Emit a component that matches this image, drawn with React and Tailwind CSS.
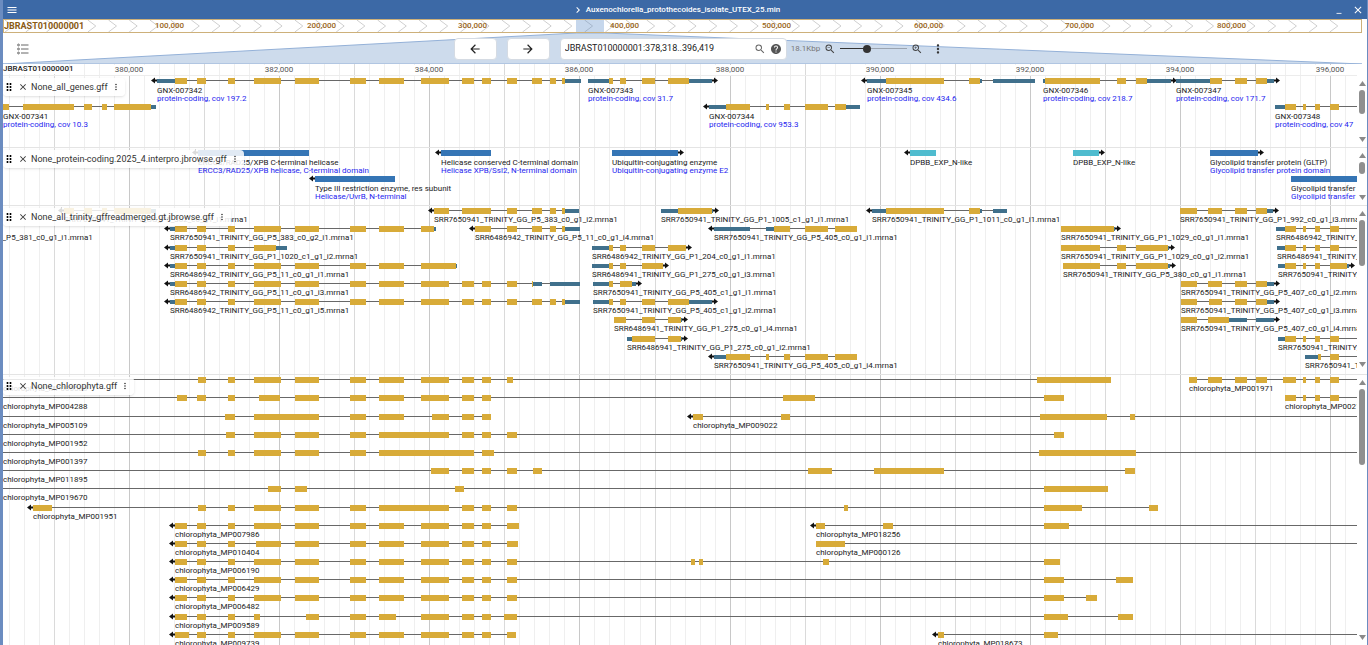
import clsx from 'clsx';
import {
    MdArrowBack, MdArrowForward, MdClose, MdDragIndicator, MdHelp, MdKeyboardArrowRight,
    MdMenu, MdMinimize, MdMoreVert, MdSearch, MdZoomIn, MdZoomOut,
} from 'react-icons/md';

const ORIGIN = 3;      // x of the view's left edge
const EDGE = 2600;     // features that run out of view end here
const GOLD = '#d8ab39';
const TEAL = '#40708c';
const BLUE = '#3575b5';
const CYAN = '#4fbccf';

// exons shared by most of the gene models around 380,000..386,000
const E1 = [175, 187], E2 = [197, 206], E3 = [228, 235], E4 = [254, 281], E5 = [295, 319];
const E6 = [350, 366], E7 = [379, 404], E8 = [421, 449], E9 = [462, 474], E10 = [482, 491];
const E11 = [507, 517], E12 = [532, 542], E13 = [550, 556], E14 = [562, 565];
const HEAD = [E1, E2, E3, E4, E5, E6, E7];
const MID = [E4, E5, E6, E7, E8, E9, E10];
const TAIL = [E11, E12, E13, E14];
const G343 = [[609, 613], [620, 626], [642, 655]];
const G344 = [[726, 750], [766, 769], [784, 790], [805, 828]];
const G347 = [[1235, 1247], [1256, 1267]];
const G348 = [[1285, 1296], [1303, 1306], [1315, 1320], [1330, 1339]];

const genes = [
    { row: 1, name: 'GNX-007341', desc: 'protein-coding, cov 10.3', cds: [[3, 9], [23, 74], [84, 92], [102, 107], [114, 151]], utr: [[151, 156]] },
    { row: 0, dir: -1, name: 'GNX-007342', desc: 'protein-coding, cov 197.2', cds: [...HEAD, E8, E9, E10, ...TAIL], utr: [[157, 175], [565, 581]] },
    { row: 0, dir: 1, name: 'GNX-007343', desc: 'protein-coding, cov 31.7', cds: [...G343, [668, 689]], utr: [[588, 609], [689, 712]] },
    { row: 1, dir: -1, name: 'GNX-007344', desc: 'protein-coding, cov 953.3', cds: [...G344, [835, 846]], utr: [[709, 726], [846, 860]] },
    { row: 0, dir: -1, name: 'GNX-007345', desc: 'protein-coding, cov 434.6', cds: [[886, 944], [969, 980]], utr: [[867, 886], [980, 982], [993, 1035]] },
    { row: 0, dir: 1, name: 'GNX-007346', desc: 'protein-coding, cov 218.7', cds: [[1045, 1100], [1117, 1126], [1136, 1147]], utr: [[1043, 1045], [1147, 1171]] },
    { row: 0, dir: 1, name: 'GNX-007347', desc: 'protein-coding, cov 171.7', cds: [[1210, 1222], ...G347], utr: [[1176, 1210], [1267, 1274]] },
    { row: 1, end: EDGE, name: 'GNX-007348', desc: 'protein-coding, cov 47', cds: G348, utr: [[1275, 1285]] },
];

const domains = [
    { row: 0, dir: -1, color: BLUE, cds: [[198, 309]], name: 'ERCC3/RAD25/XPB C-terminal helicase', desc: 'ERCC3/RAD25/XPB helicase, C-terminal domain' },
    { row: 1, dir: -1, color: BLUE, cds: [[315, 395]], name: 'Type III restriction enzyme, res subunit', desc: 'Helicase/UvrB, N-terminal' },
    { row: 0, dir: -1, color: BLUE, cds: [[441, 491]], name: 'Helicase conserved C-terminal domain', desc: 'Helicase XPB/Ssl2, N-terminal domain' },
    { row: 0, dir: 1, color: BLUE, cds: [[612, 678]], name: 'Ubiquitin-conjugating enzyme', desc: 'Ubiquitin-conjugating enzyme E2' },
    { row: 0, dir: -1, color: CYAN, cds: [[910, 936]], name: 'DPBB_EXP_N-like' },
    { row: 0, dir: 1, color: CYAN, cds: [[1073, 1099]], name: 'DPBB_EXP_N-like' },
    { row: 0, dir: 1, color: BLUE, cds: [[1210, 1258]], name: 'Glycolipid transfer protein (GLTP)', desc: 'Glycolipid transfer protein domain' },
    { row: 1, color: BLUE, cds: [[1291, EDGE]], name: 'Glycolipid transfer protein (GLTP)', desc: 'Glycolipid transfer protein domain' },
];

const transcripts = [
    { row: 0, dir: -1, name: 'SRR7650941_TRINITY_GG_P5_382_c0_g1_i1.mrna1', cds: [[64, 74], [84, 92], [102, 107], [114, 151]], utr: [[151, 156]] },
    { row: 0, dir: -1, name: 'SRR7650941_TRINITY_GG_P5_383_c0_g1_i2.mrna1', cds: [[434, 449], [462, 491], ...TAIL], utr: [[565, 579]] },
    { row: 0, dir: 1, name: 'SRR7650941_TRINITY_GG_P1_1005_c1_g1_i1.mrna1', cds: [[678, 712]], utr: [[661, 678], [712, 713]] },
    { row: 0, dir: -1, name: 'SRR7650941_TRINITY_GG_P1_1011_c0_g1_i1.mrna1', cds: [[886, 944], [969, 980]], utr: [[872, 886], [980, 982], [993, 1007]] },
    { row: 0, dir: 1, name: 'SRR7650941_TRINITY_GG_P1_992_c0_g1_i3.mrna1', cds: [[1180, 1197], [1208, 1222], ...G347], utr: [[1267, 1273]] },

    { row: 1, name: 'SRR7650941_TRINITY_GG_P5_381_c0_g1_i1.mrna1', cds: [[-91, -60]] },
    { row: 1, dir: -1, name: 'SRR7650941_TRINITY_GG_P5_383_c0_g2_i1.mrna1', cds: [...HEAD, [421, 434]], utr: [[170, 175], [434, 436]] },
    { row: 1, dir: -1, name: 'SRR6486942_TRINITY_GG_P5_11_c0_g1_i4.mrna1', cds: [[475, 491], ...TAIL], utr: [[565, 580]] },
    { row: 1, dir: -1, name: 'SRR7650941_TRINITY_GG_P5_405_c0_g1_i1.mrna1', cds: [[774, 790], [805, 828], [835, 857]], utr: [[714, 750], [766, 774]] },
    { row: 1, dir: 1, name: 'SRR7650941_TRINITY_GG_P1_1029_c0_g1_i1.mrna1', cds: [[1061, 1114]], utr: [[1114, 1115]] },
    { row: 1, end: EDGE, name: 'SRR6486942_TRINITY_GG_P5_406_c0_g1_i1.mrna1', cds: G348, utr: [[1276, 1285]] },

    { row: 2, dir: -1, name: 'SRR7650941_TRINITY_GG_P1_1020_c1_g1_i2.mrna1', cds: [E1, E2, E3, [254, 276]], utr: [[170, 175], [276, 287]] },
    { row: 2, dir: 1, name: 'SRR6486942_TRINITY_GG_P1_204_c0_g1_i1.mrna1', cds: [...G343, [668, 686]], utr: [[592, 609]] },
    { row: 2, dir: 1, name: 'SRR7650941_TRINITY_GG_P1_1029_c0_g1_i2.mrna1', cds: [[1061, 1100], [1117, 1126], [1136, 1168]], utr: [[1168, 1169]] },
    { row: 2, end: EDGE, name: 'SRR6486941_TRINITY_GG_P5_406_c0_g1_i2.mrna1', cds: G348, utr: [[1277, 1285]] },

    { row: 3, dir: -1, name: 'SRR6486942_TRINITY_GG_P5_11_c0_g1_i1.mrna1', cds: [...HEAD, [421, 456]], utr: [[170, 175], [456, 457]] },
    { row: 3, dir: 1, name: 'SRR6486941_TRINITY_GG_P1_275_c0_g1_i3.mrna1', cds: [[609, 613], [620, 626], [642, 663]], utr: [[592, 609]] },
    { row: 3, dir: 1, name: 'SRR7650941_TRINITY_GG_P5_380_c0_g1_i1.mrna1', cds: [[1063, 1100], [1117, 1126], [1136, 1168]], utr: [[1168, 1170]] },
    { row: 3, dir: 1, name: 'SRR7650941_TRINITY_GG_P5_406_c0_g1_i3.mrna1', cds: [[1285, 1296], [1303, 1306], [1315, 1320], [1330, 1347]], utr: [[1278, 1285], [1347, 1349]] },

    { row: 4, dir: -1, name: 'SRR6486942_TRINITY_GG_P5_11_c0_g1_i3.mrna1', cds: [...HEAD, E8, E9, E10, E11, [532, 533]], utr: [[170, 175], [533, 542], [550, 580]] },
    { row: 4, dir: 1, name: 'SRR7650941_TRINITY_GG_P5_405_c1_g1_i1.mrna1', cds: [[609, 613], [620, 632]], utr: [[593, 609], [632, 636]] },
    { row: 4, dir: 1, name: 'SRR7650941_TRINITY_GG_P5_407_c0_g1_i2.mrna1', cds: [[1181, 1197], [1208, 1222], ...G347], utr: [[1267, 1274]] },

    { row: 5, dir: -1, name: 'SRR6486942_TRINITY_GG_P5_11_c0_g1_i5.mrna1', cds: [...HEAD, E8, E9, E10, ...TAIL], utr: [[170, 175], [565, 580]] },
    { row: 5, dir: 1, name: 'SRR7650941_TRINITY_GG_P5_405_c1_g1_i2.mrna1', cds: [...G343, [668, 689]], utr: [[593, 609], [689, 712]] },
    { row: 5, dir: 1, name: 'SRR7650941_TRINITY_GG_P5_407_c0_g1_i3.mrna1', cds: [[1181, 1197], [1209, 1222], ...G347], utr: [[1267, 1274]] },

    { row: 6, dir: 1, name: 'SRR6486941_TRINITY_GG_P1_275_c0_g1_i4.mrna1', cds: [[614, 626], [642, 655], [668, 681]], utr: [[681, 682]] },
    { row: 6, dir: 1, name: 'SRR7650941_TRINITY_GG_P5_407_c0_g1_i4.mrna1', cds: [[1181, 1197], [1208, 1229]], utr: [[1229, 1247], [1256, 1274]] },

    { row: 7, dir: 1, name: 'SRR6486941_TRINITY_GG_P1_275_c0_g1_i2.mrna1', cds: [[632, 655], [668, 681]], utr: [[627, 632], [681, 682]] },
    { row: 7, end: EDGE, name: 'SRR7650941_TRINITY_GG_P5_406_c0_g1_i4.mrna1', cds: G348, utr: [[1278, 1285]] },

    { row: 8, dir: -1, name: 'SRR7650941_TRINITY_GG_P5_405_c0_g1_i4.mrna1', cds: [...G344, [835, 857]], utr: [[714, 726]] },
    { row: 8, end: EDGE, name: 'SRR7650941_TRINITY_GG_P5_406_c0_g1_i5.mrna1', cds: [[1318, 1321], [1330, 1339]], utr: [[1305, 1318]] },

    { row: 9, cds: [...G344, [835, 858]] },
    { row: 9, cds: [[1308, 1320], [1330, 1339]] },
];

const proteins = [
    { row: 0, start: 3, name: 'chlorophyta_MP005588', cds: [[198, 206], E3, ...MID, [507, 513], [1037, 1111]] },
    { row: 0, end: EDGE, name: 'chlorophyta_MP001971', cds: [[1189, 1197], [1208, 1222], ...G347, [1283, 1296], ...G348.slice(1)] },
    { row: 1, start: 3, name: 'chlorophyta_MP004288', cds: [[177, 187], E2, E3, [259, 280], E5, E6, E7, E8, E9, E10, [783, 815], [1044, 1064]] },
    { row: 1, end: EDGE, name: 'chlorophyta_MP002140', cds: G348 },
    { row: 2, start: 3, name: 'chlorophyta_MP005109', cds: [[225, 235], [254, 319], E6, E7, [432, 449], E9, E10] },
    { row: 2, dir: -1, end: EDGE, name: 'chlorophyta_MP009022', cds: [[693, 703], [781, 790], [1040, 1107], [1130, 1135]] },
    { row: 3, start: 3, name: 'chlorophyta_MP001952', cds: [[226, 235], E4, E5, E6, [379, 449], E9, E10, E11, [1054, 1064]] },
    { row: 4, start: 3, end: EDGE, name: 'chlorophyta_MP001397', cds: [[198, 206], E3, E4, E5, E6, [379, 474], [482, 494], [1039, 1136]] },
    { row: 5, start: 3, name: 'chlorophyta_MP011895', cds: [[431, 449], E9, E10, E11, [533, 542], [808, 832], [874, 944], [1125, 1135]] },
    { row: 6, start: 3, name: 'chlorophyta_MP019670', cds: [[268, 281], [295, 307], [455, 464], [1044, 1108]] },
    { row: 7, dir: -1, name: 'chlorophyta_MP001951', cds: [[33, 52], [198, 206], E3, E4, E5, E6, [379, 449], E9, E10, E11, [844, 848], [1044, 1082], [1149, 1158]] },
    { row: 8, dir: -1, name: 'chlorophyta_MP007986', cds: [E1, E2, E3, ...MID, [507, 519]] },
    { row: 8, dir: -1, end: EDGE, name: 'chlorophyta_MP018256', cds: [[816, 825], [883, 893], [1044, 1069]] },
    { row: 9, dir: -1, name: 'chlorophyta_MP010404', cds: [E1, E2, E3, [256, 281], ...MID.slice(1), [507, 518]] },
    { row: 9, end: EDGE, name: 'chlorophyta_MP000126', cds: [[816, 845]] },
    { row: 10, dir: -1, name: 'chlorophyta_MP006190', cds: [E1, E2, E3, ...MID, E11, [691, 695], [699, 703], [823, 829], [1044, 1060]] },
    { row: 11, dir: -1, name: 'chlorophyta_MP006429', cds: [E1, E2, E3, ...MID, E11, [1044, 1064], [1116, 1133]] },
    { row: 12, dir: -1, name: 'chlorophyta_MP006482', cds: [E1, E2, E3, ...MID, E11, [1044, 1064], [1086, 1097]] },
    { row: 13, dir: -1, name: 'chlorophyta_MP009589', cds: [E1, E2, E3, [254, 260], [306, 319], E6, [379, 396], E8, E9, E10, [504, 517], [1044, 1068], [1118, 1133]] },
    { row: 14, dir: -1, name: 'chlorophyta_MP009739', cds: [[175, 189], E2, E3, ...MID, [507, 516]] },
    { row: 14, dir: -1, end: EDGE, name: 'chlorophyta_MP018673', cds: [[938, 944], [1044, 1058]] },
];

const tracks = [
    { label: 'None_all_genes.gff', features: genes, pitch: 26, nameGap: 12, size: 'h-[72px] border-b', thumb: 'h-[24px]' },
    { label: 'None_protein-coding.2025_4.interpro.jbrowse.gff', features: domains, pitch: 26, nameGap: 12, size: 'h-[58px] border-b', thumb: 'h-[12px]' },
    { label: 'None_all_trinity_gffreadmerged.gt.jbrowse.gff', features: transcripts, pitch: 18.2, nameGap: 11, size: 'h-[169px] border-b pb-[2px]', thumb: 'h-[46px]' },
    { label: 'None_chlorophyta.gff', features: proteins, pitch: 18.2, nameGap: 11, size: 'min-h-[270px] flex-1', thumb: 'h-[76px]' },
];

const gridLines = Array.from({ length: 170 }, (_, i) => ({
    x: Math.round(129 + (i - 8) * 15.015),
    kind: (i - 8) % 10 === 0 ? 'major' : (i - 8) % 5 === 0 ? 'half' : 'minor',
}));
const gridColor = { major: '#c8c8c8', half: '#dadada', minor: '#efefef' };
const ticks = Array.from({ length: 9 }, (_, i) => ({ x: Math.round(129 + i * 150.15), text: `${380 + i * 2},000` }));

function TrackListIcon() {
    return (
        <svg viewBox="0 0 24 24" className="size-3" fill="none" stroke="currentColor" strokeWidth="2">
            <path d="M8 4h15M8 12h15M8 20h15" />
            <circle cx="3" cy="4" r="1.8" />
            <circle cx="3" cy="12" r="1.8" />
            <circle cx="3" cy="20" r="1.8" />
        </svg>
    );
}

function GridLines() {
    return (
        <svg className="absolute inset-0 size-full" shapeRendering="crispEdges">
            {gridLines.map(l => (
                <line key={l.x} x1={l.x - ORIGIN + 0.5} x2={l.x - ORIGIN + 0.5} y1="0" y2="100%" stroke={gridColor[l.kind]} />
            ))}
        </svg>
    );
}

function Feature({ feature, pitch, nameGap }) {
    const { row, dir, color = GOLD, cds, utr = [], name, desc } = feature;
    const blocks = [...cds, ...utr];
    const left = Math.min(...blocks.map(b => b[0]));
    const start = feature.start ?? left;
    const end = feature.end ?? Math.max(...blocks.map(b => b[1]));
    const y = Math.floor(4.6 + row * pitch);

    return (
        <g>
            <g shapeRendering="crispEdges">
                <rect x={start} y={y} width={end - start} height="1" fill="#686868" />
                {utr.map(([a, b]) => <rect key={a} x={a} y={y - 1} width={b - a} height="4" fill={TEAL} />)}
                {cds.map(([a, b]) => <rect key={a} x={a} y={y - 2} width={b - a} height="6" fill={color} />)}
            </g>
            {dir === -1 && <path d={`M${start - 6} ${y}.5l4-3v2h2v2h-2v2z`} fill="#111" />}
            {dir === 1 && <path d={`M${end + 6} ${y}.5l-4-3v2h-2v2h2v2z`} fill="#111" />}
            {name && <text x={start} y={y + nameGap + 1} fill="#222">{name}</text>}
            {desc && <text x={start} y={y + nameGap + 9} fill="#2525f0">{desc}</text>}
        </g>
    );
}

function TrackLabel({ text }) {
    return (
        <div className="absolute left-0 top-[2px] flex h-[18px] items-center rounded-sm bg-white/85 pr-1 text-[#333] shadow">
            <MdDragIndicator className="size-3 cursor-grab text-black" />
            <button type="button" aria-label={`Close ${text}`} className="ml-[3px] cursor-pointer">
                <MdClose className="size-2.5" />
            </button>
            <span className="ml-[3px] whitespace-nowrap text-[9px] leading-3">{text}</span>
            <button type="button" aria-label={`${text} menu`} className="ml-[3px] cursor-pointer">
                <MdMoreVert className="size-2.5" />
            </button>
        </div>
    );
}

function ScrollBar({ thumb }) {
    return (
        <div className="flex w-[10px] shrink-0 flex-col items-center bg-white py-[5px]">
            <svg viewBox="0 0 7 5" className="h-[5px] w-[7px]"><path d="M3.5 0L7 5H0z" fill="#8a8a8a" /></svg>
            <div className={clsx('mt-1 w-1.5 rounded-full bg-[#8f8f8f]', thumb)} />
            <svg viewBox="0 0 7 5" className="mt-auto h-[5px] w-[7px]"><path d="M3.5 5L7 0H0z" fill="#8a8a8a" /></svg>
        </div>
    );
}

function Track({ track }) {
    return (
        <section className={clsx('relative flex shrink-0 border-[#e4e4e4]', track.size)}>
            <div className="relative flex-1">
                <svg className="block size-full overflow-hidden text-[8px]">
                    <g transform={`translate(${-ORIGIN} 0)`}>
                        {track.features.map((f, i) => (
                            <Feature key={i} feature={f} pitch={track.pitch} nameGap={track.nameGap} />
                        ))}
                    </g>
                </svg>
                <TrackLabel text={track.label} />
            </div>
            <ScrollBar thumb={track.thumb} />
        </section>
    );
}

function Overview() {
    const chevrons = Array.from({ length: 65 }, (_, i) => 9 + i * 20.7);
    return (
        <div className="mr-[5px] h-[14px] border border-[#cdb07a] bg-white">
            <svg className="block size-full overflow-hidden">
                {chevrons.map(x => (
                    <path key={x} d={`M${x - 8} 0l8 6l-8 6`} fill="none" stroke="#cfcfcf" />
                ))}
                <rect x="572" y="0" width="28" height="12" fill="#4f83c4" fillOpacity="0.32" />
                <text x="0" y="9" fill="#8a5a14" className="text-[9px] font-bold">JBRAST010000001</text>
                {[100, 200, 300, 400, 500, 600, 700, 800].map((n, i) => (
                    <text key={n} x={Math.round(151 + i * 151.7)} y="8" fill="#9a6518" className="text-[8px] font-medium">{n},000</text>
                ))}
            </svg>
        </div>
    );
}

function Controls() {
    return (
        <div className="relative h-[31px]">
            <svg viewBox="0 0 1358 31" preserveAspectRatio="none" className="absolute inset-0 h-full w-[calc(100%-5px)]">
                <path d="M573 0H601L1358 31H0z" fill="#cddbec" stroke="#94b1d8" vectorEffect="non-scaling-stroke" />
            </svg>
            <div className="relative flex h-full items-center pr-[5px]">
                <button type="button" aria-label="Open track selector" className="ml-3.5 mr-2 cursor-pointer text-[#666]">
                    <TrackListIcon />
                </button>
                <div className="flex flex-1 items-center justify-center">
                    <button type="button" aria-label="Pan left" className="flex h-[22px] w-[43px] cursor-pointer items-center justify-center rounded-sm border border-[#d5dbe3] bg-white text-[#222]">
                        <MdArrowBack className="size-3.5" />
                    </button>
                    <button type="button" aria-label="Pan right" className="ml-2.5 flex h-[22px] w-[43px] cursor-pointer items-center justify-center rounded-sm border border-[#d5dbe3] bg-white text-[#222]">
                        <MdArrowForward className="size-3.5" />
                    </button>
                    <div className="ml-2.5 flex h-[22px] w-[227px] items-center rounded-sm border border-[#d5dbe3] bg-white px-1">
                        <input
                            aria-label="Location"
                            defaultValue="JBRAST010000001:378,318..396,419"
                            className="min-w-0 flex-1 text-[9px] text-[#222] outline-none"
                        />
                        <button type="button" aria-label="Search" className="cursor-pointer text-[#666]"><MdSearch className="size-3" /></button>
                        <button type="button" aria-label="Help" className="ml-1 cursor-pointer text-[#555]"><MdHelp className="size-3" /></button>
                    </div>
                    <span className="ml-1 text-[8px] text-[#777]">18.1Kbp</span>
                    <button type="button" aria-label="Zoom out" className="ml-1 cursor-pointer text-[#444]"><MdZoomOut className="size-3" /></button>
                    <input
                        type="range"
                        aria-label="Zoom"
                        min="0"
                        max="100"
                        defaultValue="39"
                        className="mx-1 h-px w-[67px] cursor-pointer appearance-none bg-[linear-gradient(to_right,#333_40%,#9ba4b0_40%)] [&::-webkit-slider-thumb]:size-2 [&::-webkit-slider-thumb]:appearance-none [&::-webkit-slider-thumb]:rounded-full [&::-webkit-slider-thumb]:bg-[#333]"
                    />
                    <button type="button" aria-label="Zoom in" className="cursor-pointer text-[#444]"><MdZoomIn className="size-3" /></button>
                    <button type="button" aria-label="View menu" className="ml-2 cursor-pointer text-[#333]"><MdMoreVert className="size-3.5" /></button>
                </div>
            </div>
        </div>
    );
}

export default function App() {
    return (
        <div className="flex h-screen flex-col overflow-hidden border-l-[3px] border-r border-[#6b8cc0] bg-white font-['Roboto',sans-serif]">
            <header className="-ml-[3px] -mr-px flex h-[19px] shrink-0 items-center bg-[#3c69a6] pl-1.5 pr-1 text-white">
                <button type="button" aria-label="Menu" className="cursor-pointer"><MdMenu className="size-3" /></button>
                <h1 className="flex flex-1 items-center justify-center text-[8px] font-medium">
                    <MdKeyboardArrowRight className="mr-0.5 size-3" />
                    Auxenochlorella_protothecoides_isolate_UTEX_25.min
                </h1>
                <button type="button" aria-label="Minimize" className="cursor-pointer"><MdMinimize className="size-2.5" /></button>
                <button type="button" aria-label="Close" className="ml-2 cursor-pointer"><MdClose className="size-3" /></button>
            </header>

            <Overview />
            <Controls />

            <main className="relative flex min-h-0 flex-1 flex-col">
                {/* grid shared by the ruler and all tracks */}
                <div className="absolute inset-y-0 left-0 right-[10px]"><GridLines /></div>

                <div className="relative mr-[10px] h-3 shrink-0 border-b border-[#ececec]">
                    <svg className="block size-full overflow-hidden text-[8px]">
                        {ticks.map(t => (
                            <g key={t.x}>
                                <rect x={t.x - ORIGIN - 16} y="1" width="32" height="10" fill="#fff" />
                                <text x={t.x - ORIGIN} y="8" textAnchor="middle" fill="#555">{t.text}</text>
                            </g>
                        ))}
                        <rect x="0" y="0" width="66" height="10" fill="#fff" />
                        <text x="0" y="7" fill="#222" className="font-medium">JBRAST010000001</text>
                    </svg>
                </div>

                {tracks.map(t => <Track key={t.label} track={t} />)}
            </main>
        </div>
    );
}
